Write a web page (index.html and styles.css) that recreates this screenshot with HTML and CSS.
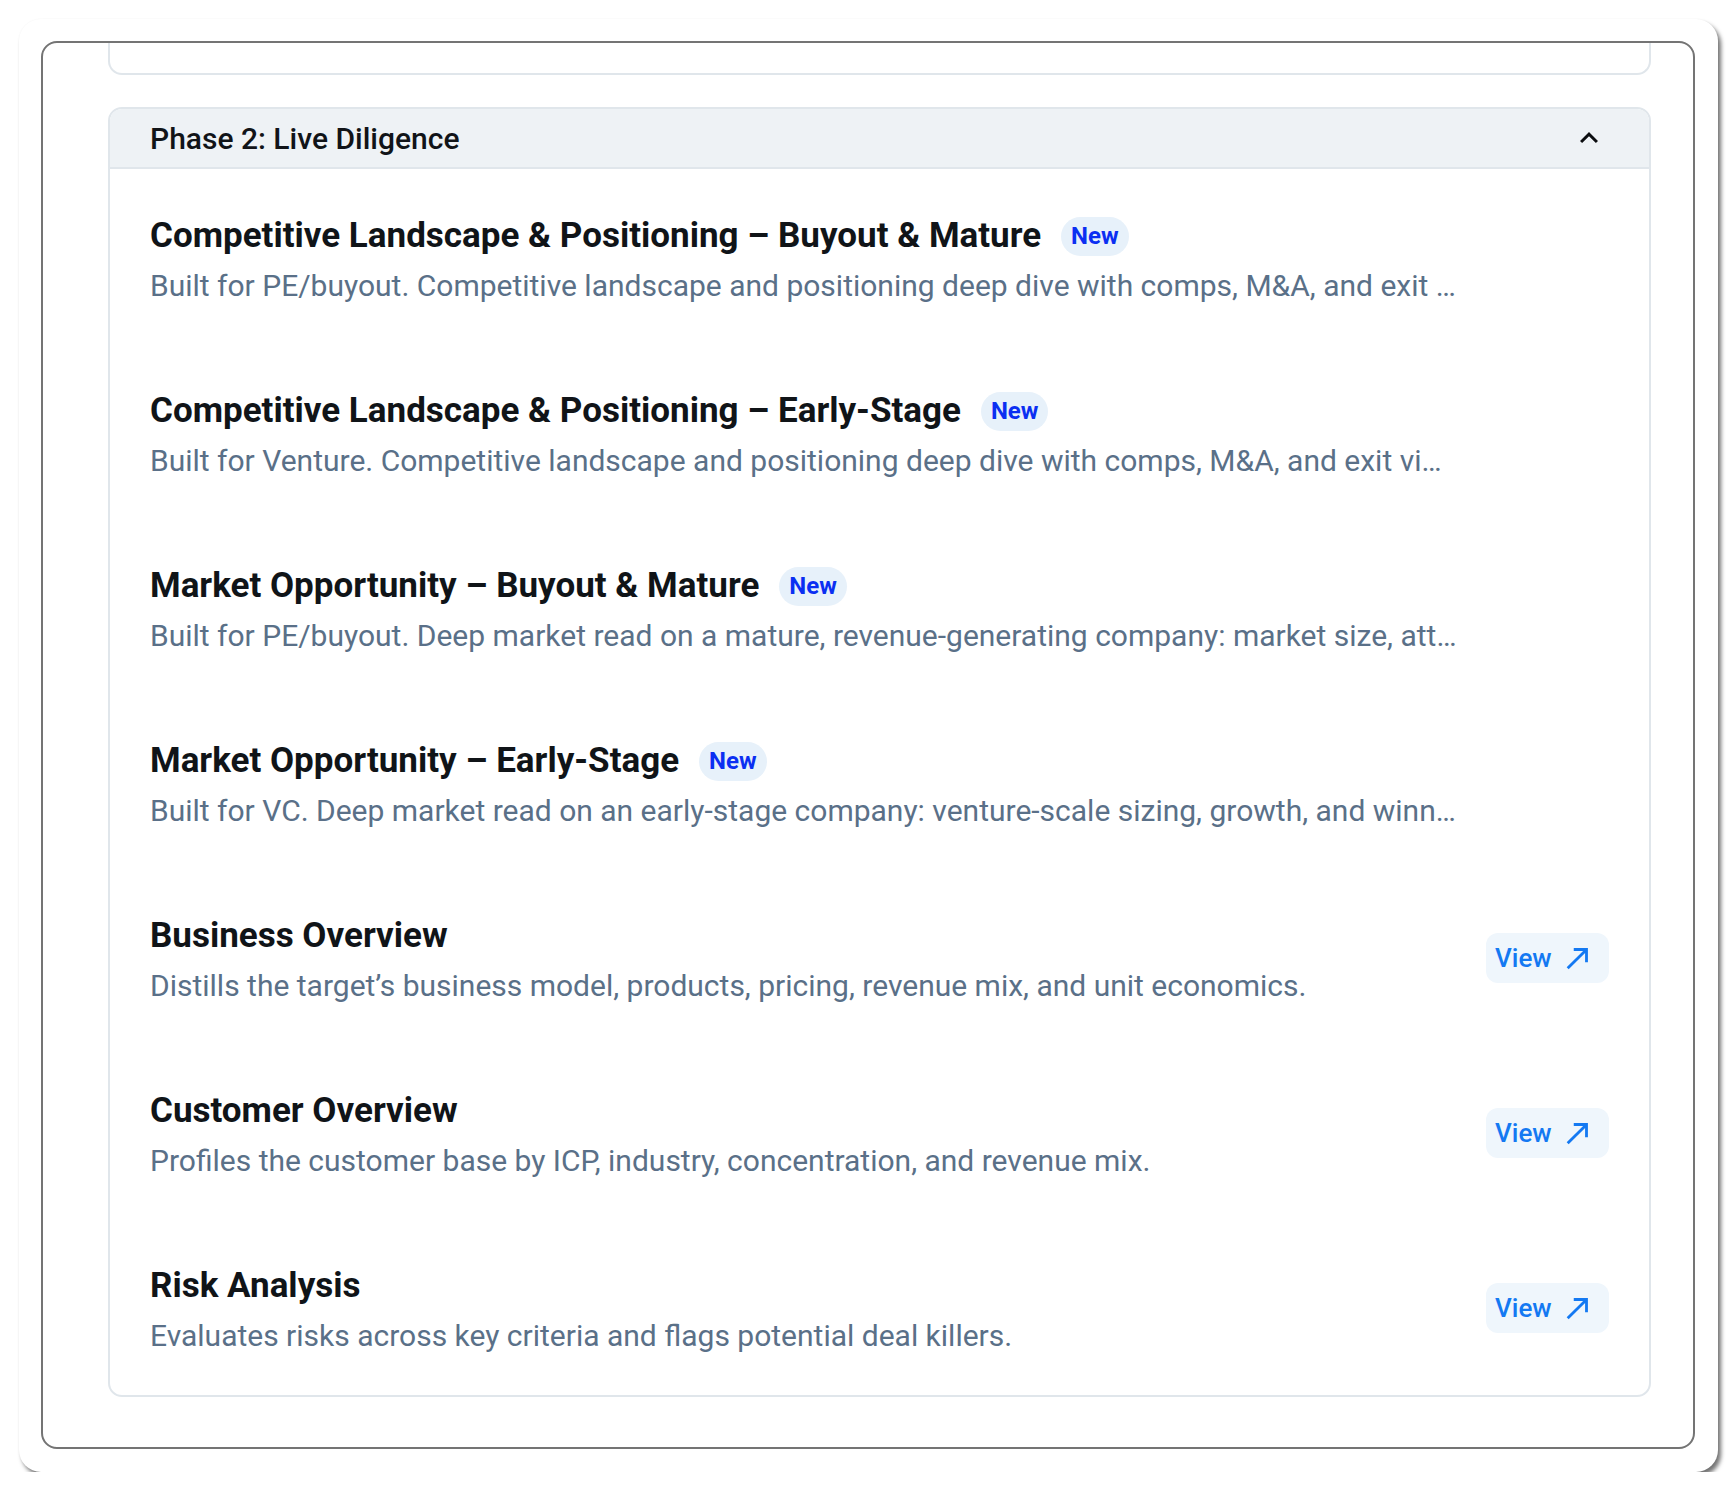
FILE: index.html
```html
<!DOCTYPE html>
<html lang="en">
<head>
<meta charset="utf-8">
<title>Diligence Playbook</title>
<link rel="stylesheet" href="styles.css">
</head>
<body>
<div class="window">
  <div class="panel">
    <div class="phase phase-tail"></div>

    <section class="phase">
      <header class="phase-head">
        <h2 class="phase-title">Phase 2: Live Diligence</h2>
        <svg class="chevron" viewBox="0 0 24 24" width="36" height="36" aria-hidden="true">
          <path d="M12 8l-6 6 1.41 1.41L12 10.83l4.59 4.58L18 14z"/>
        </svg>
      </header>

      <ul class="tasks">
        <li class="task">
          <div class="task-text">
            <div class="task-title-row">
              <h3 class="task-title">Competitive Landscape &amp; Positioning – Buyout &amp; Mature</h3>
              <span class="badge">New</span>
            </div>
            <p class="task-desc">Built for PE/buyout. Competitive landscape and positioning deep dive with comps, M&amp;A, and exit scenarios for mature companies.</p>
          </div>
          <div class="task-action"></div>
        </li>
        <li class="task">
          <div class="task-text">
            <div class="task-title-row">
              <h3 class="task-title">Competitive Landscape &amp; Positioning – Early-Stage</h3>
              <span class="badge">New</span>
            </div>
            <p class="task-desc">Built for Venture. Competitive landscape and positioning deep dive with comps, M&amp;A, and exit vintage outcomes for early-stage companies.</p>
          </div>
          <div class="task-action"></div>
        </li>
        <li class="task">
          <div class="task-text">
            <div class="task-title-row">
              <h3 class="task-title">Market Opportunity – Buyout &amp; Mature</h3>
              <span class="badge">New</span>
            </div>
            <p class="task-desc">Built for PE/buyout. Deep market read on a mature, revenue-generating company: market size, attractiveness, and share.</p>
          </div>
          <div class="task-action"></div>
        </li>
        <li class="task">
          <div class="task-text">
            <div class="task-title-row">
              <h3 class="task-title">Market Opportunity – Early-Stage</h3>
              <span class="badge">New</span>
            </div>
            <p class="task-desc">Built for VC. Deep market read on an early-stage company: venture-scale sizing, growth, and winners in the space.</p>
          </div>
          <div class="task-action"></div>
        </li>
        <li class="task">
          <div class="task-text">
            <div class="task-title-row">
              <h3 class="task-title">Business Overview</h3>
            </div>
            <p class="task-desc">Distills the target’s business model, products, pricing, revenue mix, and unit economics.</p>
          </div>
          <div class="task-action">
            <a class="view-btn" href="#">View
              <svg viewBox="0 0 24 24" width="34" height="34" aria-hidden="true"><path d="M9 5v2h6.59L4 18.59 5.41 20 17 8.41V15h2V5z"/></svg>
            </a>
          </div>
        </li>
        <li class="task">
          <div class="task-text">
            <div class="task-title-row">
              <h3 class="task-title">Customer Overview</h3>
            </div>
            <p class="task-desc">Profiles the customer base by ICP, industry, concentration, and revenue mix.</p>
          </div>
          <div class="task-action">
            <a class="view-btn" href="#">View
              <svg viewBox="0 0 24 24" width="34" height="34" aria-hidden="true"><path d="M9 5v2h6.59L4 18.59 5.41 20 17 8.41V15h2V5z"/></svg>
            </a>
          </div>
        </li>
        <li class="task">
          <div class="task-text">
            <div class="task-title-row">
              <h3 class="task-title">Risk Analysis</h3>
            </div>
            <p class="task-desc">Evaluates risks across key criteria and flags potential deal killers.</p>
          </div>
          <div class="task-action">
            <a class="view-btn" href="#">View
              <svg viewBox="0 0 24 24" width="34" height="34" aria-hidden="true"><path d="M9 5v2h6.59L4 18.59 5.41 20 17 8.41V15h2V5z"/></svg>
            </a>
          </div>
        </li>
      </ul>
    </section>
  </div>
</div>
</body>
</html>
```

FILE: styles.css
```css
* {
  box-sizing: border-box;
}

html, body {
  background: #ffffff;
}

body {
  margin: 0;
  padding: 19px 0 0 19px;
  font-family: Roboto, "Liberation Sans", Arial, sans-serif;
  color: #101418;
}

/* outer white sheet with a hard drop shadow */
.window {
  width: 1699px;
  height: 1453px;
  padding: 22px 23px 23px 22px;
  background: #ffffff;
  border-radius: 22px;
  box-shadow: 3px 4px 4px rgba(0, 0, 0, 0.55), 0 0 2px rgba(0, 0, 0, 0.04);
}

/* scrolled panel; the previous phase card is cut off at its top edge */
.panel {
  height: 100%;
  border: 2px solid #747474;
  border-radius: 16px;
  padding: 0 42px 0 65px;
  overflow: hidden;
  display: flex;
  flex-direction: column;
  gap: 32px;
}

.phase {
  border: 2px solid #e0e6eb;
  border-radius: 14px;
  background: #ffffff;
  overflow: hidden;
  flex-shrink: 0;
}

.phase-tail {
  height: 32px;
  border-top: none;
  border-radius: 0 0 14px 14px;
}

.phase-head {
  height: 60px;
  display: flex;
  align-items: center;
  justify-content: space-between;
  padding: 0 42px 0 40px;
  background: #eef2f5;
  border-bottom: 2px solid #e0e6eb;
}

.phase-title {
  margin: 0;
  font-size: 30px;
  font-weight: 500;
  color: #111418;
}

.chevron {
  display: block;
  fill: #0b0d10;
}

.tasks {
  list-style: none;
  margin: 0;
  padding: 41px 40px 35px 40px;
  display: flex;
  flex-direction: column;
  gap: 75px;
}

.task {
  display: grid;
  grid-template-columns: minmax(0, 1fr) 123px;
  column-gap: 28px;
  align-items: center;
}

.task-text {
  min-width: 0;
}

.task-title-row {
  display: flex;
  align-items: center;
  gap: 20px;
  height: 52px;
}

.task-title {
  margin: 0;
  font-size: 35px;
  line-height: 52px;
  font-weight: 700;
  color: #101418;
  white-space: nowrap;
}

.badge {
  display: inline-flex;
  align-items: center;
  height: 39px;
  padding: 0 10px;
  border-radius: 20px;
  background: #e7f1fa;
  color: #0b2ff2;
  font-size: 24px;
  font-weight: 700;
}

.task-desc {
  margin: 0;
  font-size: 30px;
  line-height: 48px;
  color: #5a7088;
  white-space: nowrap;
  overflow: hidden;
  text-overflow: ellipsis;
}

.task-action {
  display: flex;
  justify-content: flex-end;
  margin-top: -5px;
}

.view-btn {
  display: inline-flex;
  align-items: center;
  justify-content: space-between;
  width: 123px;
  height: 50px;
  padding: 0 14px 0 9px;
  border-radius: 12px;
  background: #eff6fc;
  color: #1479f2;
  font-size: 26px;
  font-weight: 500;
  text-decoration: none;
}

.view-btn svg {
  display: block;
  fill: currentColor;
}
```
